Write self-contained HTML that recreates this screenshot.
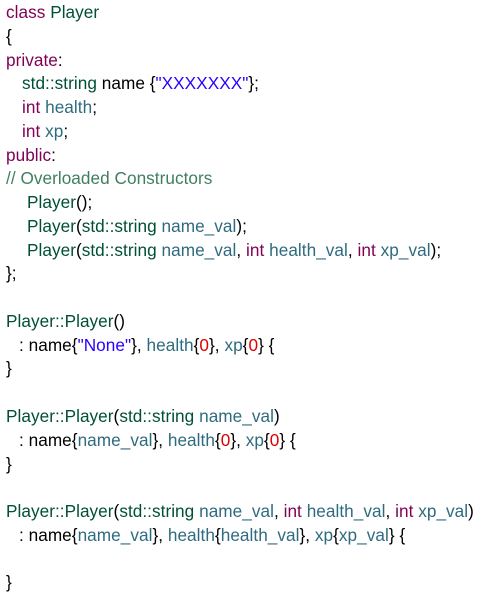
<!DOCTYPE html>
<html><head><style>
body{margin:0;background:#fff;width:480px;height:597px;overflow:hidden}
pre{margin:0;position:absolute;top:1px;left:6px;font-family:"Liberation Sans",sans-serif;font-size:17.2px;line-height:23.76px;color:#000;white-space:pre;letter-spacing:0.04px}
.k{color:#7f0055}.t{color:#005032}.v{color:#2f6b7f}.s{color:#2a00ff}.n{color:#e00000}.c{color:#3f7f5f}
.i1{padding-left:16px}.i2{padding-left:21px}.i3{padding-left:13px}
</style></head><body><pre><span class="k">class</span> <span class="t">Player</span>
{
<span class="k">private</span>:
<span class="i1"></span><span class="t">std::string</span> name {<span class="s">"XXXXXXX"</span>};
<span class="i1"></span><span class="k">int</span> <span class="v">health</span>;
<span class="i1"></span><span class="k">int</span> <span class="v">xp</span>;
<span class="k">public</span>:
<span class="c">// Overloaded Constructors</span>
<span class="i2"></span><span class="t">Player</span>();
<span class="i2"></span><span class="t">Player</span>(<span class="t">std::string</span> <span class="v">name_val</span>);
<span class="i2"></span><span class="t">Player</span>(<span class="t">std::string</span> <span class="v">name_val</span>, <span class="k">int</span> <span class="v">health_val</span>, <span class="k">int</span> <span class="v">xp_val</span>);
};

<span class="t">Player::Player</span>()
<span class="i3"></span>: name{<span class="s">"None"</span>}, <span class="v">health</span>{<span class="n">0</span>}, <span class="v">xp</span>{<span class="n">0</span>} {
}

<span class="t">Player::Player</span>(<span class="t">std::string</span> <span class="v">name_val</span>)
<span class="i3"></span>: name{<span class="v">name_val</span>}, <span class="v">health</span>{<span class="n">0</span>}, <span class="v">xp</span>{<span class="n">0</span>} {
}

<span class="t">Player::Player</span>(<span class="t">std::string</span> <span class="v">name_val</span>, <span class="k">int</span> <span class="v">health_val</span>, <span class="k">int</span> <span class="v">xp_val</span>)
<span class="i3"></span>: name{<span class="v">name_val</span>}, <span class="v">health</span>{<span class="v">health_val</span>}, <span class="v">xp</span>{<span class="v">xp_val</span>} {

}</pre></body></html>
